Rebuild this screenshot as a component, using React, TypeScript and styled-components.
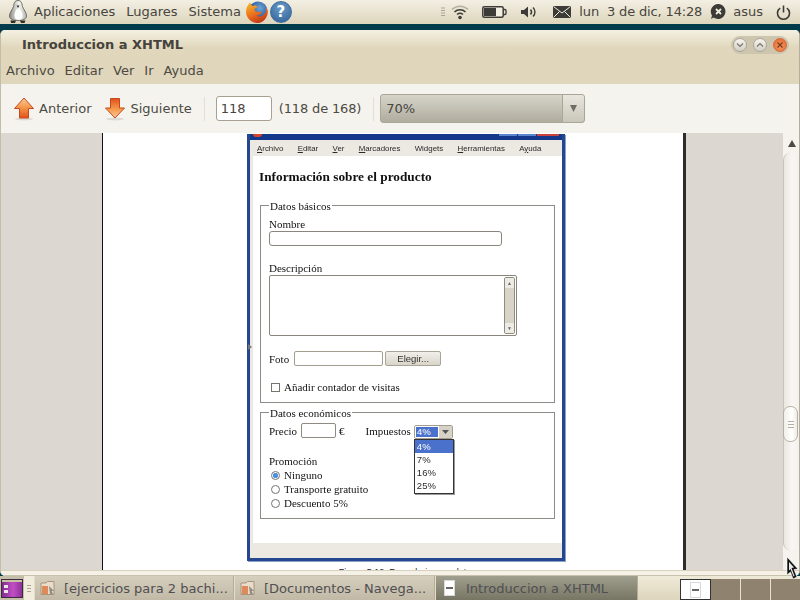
import { createGlobalStyle, styled } from 'styled-components';

const Global = createGlobalStyle`
    html, body {
        margin: 0;
        padding: 0;
        width: 800px;
        height: 600px;
        overflow: hidden;
        background: #003b4c;
    }
    * { box-sizing: border-box; }
`;

const uiFont = `'DejaVu Sans', sans-serif`;
const serif = `'Liberation Serif', serif`;
const arial = `'Liberation Sans', sans-serif`;

export default function App() {
    return (
        <Screen>
            <Global />
            <TopPanel>
                <PenguinSlot>
                    <Penguin />
                </PenguinSlot>
                <PanelMenu>
                    <span>Aplicaciones</span>
                    <span>Lugares</span>
                    <span>Sistema</span>
                </PanelMenu>
                <Launchers>
                    <FirefoxIcon />
                    <HelpCircle>?</HelpCircle>
                </Launchers>
                <Tray>
                    <WifiIcon />
                    <BatteryIcon />
                    <VolumeIcon />
                    <MailIcon />
                    <Clock>lun&nbsp; 3 de dic, 14:28</Clock>
                    <UserIcon />
                    <UserName>asus</UserName>
                    <PowerIcon />
                </Tray>
            </TopPanel>
            <DesktopStrip />
            <Window>
                <TitleBar>
                    <Title>Introduccion a XHTML</Title>
                    <WindowButtons>
                        <WinButton>
                            <svg width="10" height="10" viewBox="0 0 10 10">
                                <path d="M2 3.5 L5 6.5 L8 3.5" fill="none" stroke="#77746c" strokeWidth="1.2" />
                            </svg>
                        </WinButton>
                        <WinButton>
                            <svg width="10" height="10" viewBox="0 0 10 10">
                                <path d="M2 6.5 L5 3.5 L8 6.5" fill="none" stroke="#77746c" strokeWidth="1.2" />
                            </svg>
                        </WinButton>
                        <WinButton $close>
                            <svg width="10" height="10" viewBox="0 0 10 10">
                                <path d="M2.5 2.5 L7.5 7.5 M7.5 2.5 L2.5 7.5" fill="none" stroke="#7a3d20" strokeWidth="1.3" />
                            </svg>
                        </WinButton>
                    </WindowButtons>
                </TitleBar>
                <MenuBar>
                    <span>Archivo</span>
                    <span>Editar</span>
                    <span>Ver</span>
                    <span>Ir</span>
                    <span>Ayuda</span>
                </MenuBar>
                <Toolbar>
                    <ToolButton>
                        <ArrowIcon />
                        Anterior
                    </ToolButton>
                    <ToolButton>
                        <ArrowIcon $down />
                        Siguiente
                    </ToolButton>
                    <ToolSep />
                    <PageInput>118</PageInput>
                    <PageCount>(118 de 168)</PageCount>
                    <ToolSep />
                    <ZoomCombo>
                        <ZoomValue>70%</ZoomValue>
                        <ZoomArrow>
                            <svg width="7" height="7" viewBox="0 0 7 7">
                                <path d="M0 0 H7 L3.5 7 Z" fill="#6f6c64" />
                            </svg>
                        </ZoomArrow>
                    </ZoomCombo>
                </Toolbar>
                <Content>
                    <Viewer>
                        <Page>
                            <Figure>
                                <FigureTitle>
                                    <FigureFavicon />
                                    <FigureButton $w={18} />
                                    <FigureButton $w={18} />
                                    <FigureButton $w={22} $red />
                                </FigureTitle>
                                <FigureMenu>
                                    <span><u>A</u>rchivo</span>
                                    <span><u>E</u>ditar</span>
                                    <span><u>V</u>er</span>
                                    <span><u>M</u>arcadores</span>
                                    <span>Wid<u>g</u>ets</span>
                                    <span><u>H</u>erramientas</span>
                                    <span>A<u>y</u>uda</span>
                                </FigureMenu>
                                <FigureBody>
                                    <Heading>Información sobre el producto</Heading>
                                    <Group $h={203} $gap={4} $pad={7}>
                                        <Legend>Datos básicos</Legend>
                                        <FieldLabel>Nombre</FieldLabel>
                                        <NameInput />
                                        <FieldLabel $top={16}>Descripción</FieldLabel>
                                        <TextArea>
                                            <AreaScroll>
                                                <AreaArrow>▲</AreaArrow>
                                                <AreaTrack />
                                                <AreaArrow>▼</AreaArrow>
                                            </AreaScroll>
                                        </TextArea>
                                        <PhotoRow>
                                            Foto
                                            <FileInput />
                                            <ChooseButton>Elegir...</ChooseButton>
                                        </PhotoRow>
                                        <CheckRow>
                                            <CheckBox />
                                            Añadir contador de visitas
                                        </CheckRow>
                                    </Group>
                                    <Group $h={112} $pad={4}>
                                        <Legend>Datos económicos</Legend>
                                        <PriceRow>
                                            Precio
                                            <PriceInput />
                                            <span>€</span>
                                            <TaxLabel>Impuestos</TaxLabel>
                                            <TaxSelect>
                                                <TaxValue>4%</TaxValue>
                                                <TaxArrow>
                                                    <svg width="7" height="4" viewBox="0 0 7 4">
                                                        <path d="M0 0 H7 L3.5 4 Z" fill="#555" />
                                                    </svg>
                                                </TaxArrow>
                                                <TaxList>
                                                    <TaxOption $active>4%</TaxOption>
                                                    <TaxOption>7%</TaxOption>
                                                    <TaxOption>16%</TaxOption>
                                                    <TaxOption>25%</TaxOption>
                                                </TaxList>
                                            </TaxSelect>
                                        </PriceRow>
                                        <FieldLabel $top={17}>Promoción</FieldLabel>
                                        <RadioRow>
                                            <Radio $on />
                                            Ninguno
                                        </RadioRow>
                                        <RadioRow>
                                            <Radio />
                                            Transporte gratuito
                                        </RadioRow>
                                        <RadioRow>
                                            <Radio />
                                            Descuento 5%
                                        </RadioRow>
                                    </Group>
                                </FigureBody>
                                <FigureStatus />
                            </Figure>
                            <Caption>Figura 5.12. Formulario completo</Caption>
                        </Page>
                        <SideMark />
                    </Viewer>
                    <ScrollBar>
                        <ScrollUp>
                            <svg width="8" height="7" viewBox="0 0 8 7">
                                <path d="M4 0 L8 7 H0 Z" fill="#4c4a45" />
                            </svg>
                        </ScrollUp>
                        <ScrollTrack>
                            <ScrollThumb>
                                <i />
                                <i />
                                <i />
                            </ScrollThumb>
                        </ScrollTrack>
                    </ScrollBar>
                </Content>
                <WindowFoot />
            </Window>
            <BottomPanel>
                <ShowDesktop>
                    <svg width="22" height="19" viewBox="0 0 22 19">
                        <defs>
                            <linearGradient id="desk" x1="0" x2="1" y1="0" y2="0">
                                <stop offset="0" stopColor="#7b2a8c" />
                                <stop offset="0.55" stopColor="#c24fc4" />
                                <stop offset="1" stopColor="#8a2f94" />
                            </linearGradient>
                        </defs>
                        <rect x="0.5" y="0.5" width="21" height="18" fill="url(#desk)" stroke="#3c2a3e" />
                        <rect x="1" y="1" width="20" height="2" fill="#c9c4a2" />
                        <rect x="3" y="6" width="4" height="3" fill="#f2e6f2" />
                        <rect x="3" y="11" width="4" height="3" fill="#f2e6f2" />
                    </svg>
                </ShowDesktop>
                <Handle>
                    <i />
                    <i />
                    <i />
                </Handle>
                <TaskList>
                    <Task $w={200}>
                        <FolderIcon />
                        <TaskText>[ejercicios para 2 bachi...</TaskText>
                    </Task>
                    <Task $w={201}>
                        <FolderIcon />
                        <TaskText>[Documentos - Navega...</TaskText>
                    </Task>
                    <Task $w={203} $active>
                        <DocThumb />
                        <TaskText>Introduccion a XHTML</TaskText>
                    </Task>
                </TaskList>
                <Pager>
                    <PagerCell $active>
                        <DocThumb />
                    </PagerCell>
                    <PagerCell />
                    <PagerCell />
                    <PagerCell />
                </Pager>
            </BottomPanel>
            <Cursor>
                <svg width="13" height="25" viewBox="0 0 13 25">
                    <path d="M1 1 L12 13 L8 13.5 L11 21 L7 23 L4.5 16 L1 19 Z" fill="#111" stroke="#fff" strokeWidth="0.6" />
                    <path d="M3 6 L8 11.5 L5.5 12 L8.5 20 L7.5 20.5 L4.5 13 L3 14.5 Z" fill="#e8e8e8" />
                </svg>
            </Cursor>
        </Screen>
    );
}

function Penguin() {
    return (
        <svg width="20" height="24" viewBox="0 0 20 24">
            <defs>
                <linearGradient id="peng" x1="0" x2="1" y1="0" y2="0">
                    <stop offset="0" stopColor="#8d8d88" />
                    <stop offset="0.55" stopColor="#f4f4f1" />
                    <stop offset="1" stopColor="#b8b8b2" />
                </linearGradient>
            </defs>
            <path d="M10 0.5 C6.5 0.5 6 3.5 5.5 6.5 C4.5 9.5 1.5 12.5 1.5 16 C1.5 19 5 20.5 10 20.5 C15 20.5 18.5 19 18.5 16 C18.5 12.5 15.5 9.5 14.5 6.5 C14 3.5 13.5 0.5 10 0.5 Z" fill="url(#peng)" stroke="#54544f" strokeWidth="0.8" />
            <path d="M10 9 C8 9 6.5 12.5 6.5 15.5 C6.5 18 8 19.5 10.5 19.5 C13 19.5 14.5 18 14.5 15.5 C14.5 12.5 12.5 9 10 9 Z" fill="#fdfdfb" />
            <path d="M8.5 5.5 L11.5 5.5 L10 8 Z" fill="#33332f" />
            <path d="M2.5 20.5 H8 L7 23 H3 Z M12 20.5 H17.5 L16.5 23 H13 Z" fill="#2e2e2a" />
        </svg>
    );
}

function FirefoxIcon() {
    return (
        <svg width="24" height="24" viewBox="0 0 24 24">
            <defs>
                <radialGradient id="ffb" cx="0.6" cy="0.35" r="0.6">
                    <stop offset="0" stopColor="#6fa6d8" />
                    <stop offset="1" stopColor="#1f4f94" />
                </radialGradient>
                <linearGradient id="ffo" x1="0.2" x2="0.7" y1="0" y2="1">
                    <stop offset="0" stopColor="#f7b52c" />
                    <stop offset="0.6" stopColor="#e8641b" />
                    <stop offset="1" stopColor="#b5361a" />
                </linearGradient>
            </defs>
            <circle cx="13" cy="11" r="9.5" fill="url(#ffb)" />
            <path d="M5 2.5 C6 4 6.2 5 7.5 6 C9.5 5 12 5.5 13 7 C11 7.5 9.5 8.5 9.5 10 C10.5 12.5 14 12 16.5 11.5 C16.5 14 14 15.5 11.5 15.5 C14.5 17.5 18.5 16 20.5 12.5 C21.5 10 21.5 8 21 6.5 C23 9.5 23.5 13.5 21.5 17 C19.5 21 15.5 23.5 11.5 23 C6 22.5 1.5 18 1 12.5 C0.8 9 2.5 5 5 2.5 Z" fill="url(#ffo)" />
        </svg>
    );
}

function WifiIcon() {
    return (
        <WifiWrap>
            <svg width="6" height="10" viewBox="0 0 6 10">
                <path d="M1 1 H5 M1 3.5 H5 M1 6 H5 M1 8.5 H5" stroke="#a8a496" strokeWidth="1" />
            </svg>
            <svg width="18" height="16" viewBox="0 0 18 16">
                <path d="M1 5.5 C5.5 1 12.5 1 17 5.5" fill="none" stroke="#b5b1a3" strokeWidth="1.5" />
                <path d="M3.5 8 C6.5 5 11.5 5 14.5 8" fill="none" stroke="#3c3b37" strokeWidth="1.6" />
                <path d="M6 10.5 C7.8 9 10.2 9 12 10.5" fill="none" stroke="#3c3b37" strokeWidth="1.6" />
                <circle cx="9" cy="13.5" r="1.8" fill="#3c3b37" />
            </svg>
        </WifiWrap>
    );
}

function BatteryIcon() {
    return (
        <svg width="25" height="14" viewBox="0 0 25 14">
            <rect x="0.8" y="1.8" width="20.4" height="10.4" rx="1.5" fill="#f2eee2" stroke="#3c3b37" strokeWidth="1.5" />
            <rect x="2" y="3" width="12" height="8" fill="#3c3b37" />
            <path d="M22 4.5 H23 A1 1 0 0 1 24 5.5 V8.5 A1 1 0 0 1 23 9.5 H22" fill="none" stroke="#3c3b37" strokeWidth="1.3" />
        </svg>
    );
}

function VolumeIcon() {
    return (
        <svg width="18" height="14" viewBox="0 0 18 14">
            <path d="M1 5 H4 L8 1.5 V12.5 L4 9 H1 Z" fill="#3c3b37" />
            <path d="M10.5 4.5 C11.8 6 11.8 8 10.5 9.5" fill="none" stroke="#3c3b37" strokeWidth="1.4" />
            <path d="M13 2.5 C15.6 5 15.6 9 13 11.5" fill="none" stroke="#3c3b37" strokeWidth="1.4" />
        </svg>
    );
}

function MailIcon() {
    return (
        <svg width="18" height="12" viewBox="0 0 18 12">
            <rect width="18" height="12" fill="#3c3b37" />
            <path d="M0.5 0.5 L9 7 L17.5 0.5 M0.5 11.5 L6.5 5.5 M17.5 11.5 L11.5 5.5" fill="none" stroke="#f0ecde" strokeWidth="1" />
        </svg>
    );
}

function UserIcon() {
    return (
        <svg width="17" height="18" viewBox="0 0 17 18">
            <path d="M8.5 1 A7.5 7.5 0 1 1 3.5 14.5 L1 16 L2 12.5 A7.5 7.5 0 0 1 8.5 1 Z" fill="#3c3b37" />
            <path d="M6 6 L11 11 M11 6 L6 11" stroke="#f0ecde" strokeWidth="1.8" />
        </svg>
    );
}

function PowerIcon() {
    return (
        <svg width="15" height="15" viewBox="0 0 15 15">
            <path d="M4.2 3.2 A6 6 0 1 0 10.8 3.2" fill="none" stroke="#3c3b37" strokeWidth="1.6" />
            <path d="M7.5 0.5 V7.5" stroke="#3c3b37" strokeWidth="1.6" />
        </svg>
    );
}

function ArrowIcon({ $down }: { $down?: boolean }) {
    const id = $down ? 'arrowDown' : 'arrowUp';
    return (
        <svg width="20" height="24" viewBox="0 0 20 24">
            <defs>
                <linearGradient id={id} x1="0" x2="0" y1={$down ? '0' : '1'} y2={$down ? '1' : '0'}>
                    <stop offset="0" stopColor="#e2501b" />
                    <stop offset="0.55" stopColor="#f59a4c" />
                    <stop offset="1" stopColor="#fbc99a" />
                </linearGradient>
            </defs>
            <ellipse cx="10" cy="22" rx="9" ry="1.5" fill="#000" opacity="0.1" />
            {$down ? (
                <path d="M5.5 1.5 H14.5 V11 H19.5 L10 21 L0.5 11 H5.5 Z" fill={`url(#${id})`} stroke="#c4491c" strokeWidth="1" />
            ) : (
                <path d="M10 1 L19.5 11.5 H14.5 V21 H5.5 V11.5 H0.5 Z" fill={`url(#${id})`} stroke="#c4491c" strokeWidth="1" />
            )}
        </svg>
    );
}

function FolderIcon() {
    return (
        <svg width="16" height="16" viewBox="0 0 16 16">
            <path d="M1 3 H6 L7.5 1.5 H14 V14.5 H1 Z" fill="#e9dccb" stroke="#a8937e" />
            <rect x="2" y="6" width="6" height="8" fill="#e08a5c" />
            <path d="M9 6 L14 11 L11.5 11 L13 14 H10 Z" fill="#8f8a80" />
        </svg>
    );
}

const Screen = styled.div`
    position: relative;
    width: 800px;
    height: 600px;
    display: flex;
    flex-direction: column;
    overflow: hidden;
    font-family: ${uiFont};
    font-size: 13px;
    color: #4c4a43;
`;

const TopPanel = styled.div`
    height: 24px;
    display: flex;
    align-items: center;
    background: linear-gradient(#f3efe3, #ddd5bc);
    flex-shrink: 0;
`;

const PenguinSlot = styled.div`
    width: 34px;
    height: 24px;
    padding-left: 8px;
`;

const PanelMenu = styled.div`
    display: flex;
    gap: 11px;
    padding-bottom: 2px;
    color: #47453e;
`;

const Launchers = styled.div`
    display: flex;
    align-items: center;
    gap: 1px;
    margin-left: 4px;
`;

const HelpCircle = styled.div`
    width: 22px;
    height: 22px;
    border-radius: 50%;
    background: radial-gradient(circle at 50% 30%, #6d9cc8, #2b5f97);
    border: 1px solid #3e6d9e;
    color: #fff;
    font-size: 15px;
    font-weight: 700;
    text-align: center;
    line-height: 20px;
`;

const Tray = styled.div`
    margin-left: auto;
    display: flex;
    align-items: center;
    height: 24px;
    padding-right: 9px;
    & > svg:nth-of-type(1) { margin-left: 13px; }
    & > svg:nth-of-type(2) { margin-left: 13px; }
    & > svg:nth-of-type(3) { margin-left: 15px; }
`;

const WifiWrap = styled.div`
    display: flex;
    align-items: center;
    gap: 5px;
`;

const Clock = styled.span`
    margin: 0 8px 2px 8px;
    letter-spacing: -0.15px;
    color: #47453e;
    white-space: nowrap;
`;

const UserName = styled.span`
    margin: 0 13px 2px 6px;
    color: #47453e;
`;

const DesktopStrip = styled.div`
    height: 6px;
    background: #003b4c;
    flex-shrink: 0;
`;

const Window = styled.div`
    flex: 1;
    min-height: 0;
    display: flex;
    flex-direction: column;
    background: #f5f3ee;
    border-left: 1px solid #c4bdaa;
    border-right: 1px solid #b5ae9c;
    border-radius: 5px;
    overflow: hidden;
`;

const TitleBar = styled.div`
    height: 29px;
    display: flex;
    align-items: center;
    padding: 0 10px 0 21px;
    background: linear-gradient(#f5f1e2, #e0d7bc 60%, #dfd6bb);
    flex-shrink: 0;
`;

const Title = styled.div`
    font-weight: 700;
    font-size: 13px;
    color: #45433c;
`;

const WindowButtons = styled.div`
    margin-left: auto;
    display: flex;
    gap: 6px;
    padding: 2px 2px;
    border-radius: 9px;
    background: #cdc5ae;
`;

const WinButton = styled.div<{ $close?: boolean }>`
    width: 14px;
    height: 14px;
    border-radius: 50%;
    display: flex;
    align-items: center;
    justify-content: center;
    background: ${p => (p.$close ? 'radial-gradient(circle at 50% 60%, #f39a5f, #e4632e)' : 'linear-gradient(#f6f4ee, #d3cfc5)')};
    border: 1px solid ${p => (p.$close ? '#d46a3a' : '#a9a599')};
`;

const MenuBar = styled.div`
    height: 25px;
    display: flex;
    align-items: center;
    gap: 10px;
    padding: 0 0 2px 5px;
    background: #dfd6bb;
    color: #4c4a43;
    flex-shrink: 0;
`;

const Toolbar = styled.div`
    height: 49px;
    display: flex;
    align-items: center;
    padding-left: 13px;
    background: #f5f3ee;
    flex-shrink: 0;
`;

const ToolButton = styled.div`
    display: flex;
    align-items: center;
    gap: 5px;
    margin-right: 14px;
    color: #4c4a43;
    &:nth-child(2) { margin-right: 0; }
`;

const ToolSep = styled.div`
    width: 1px;
    height: 24px;
    margin: 0 12px;
    background: #e3dfd5;
`;

const PageInput = styled.div`
    width: 56px;
    height: 25px;
    margin-left: -1px;
    padding: 0 4px;
    line-height: 23px;
    background: #fff;
    border: 1px solid #a8a090;
    border-radius: 3px;
    color: #47453e;
`;

const PageCount = styled.div`
    margin-left: 7px;
    letter-spacing: -0.15px;
    color: #4c4a43;
    white-space: nowrap;
`;

const ZoomCombo = styled.div`
    width: 205px;
    height: 29px;
    display: flex;
    border: 1px solid #a9a698;
    border-radius: 3px;
    background: linear-gradient(#d6d3c9, #b0ad9f);
    color: #47453e;
    margin-left: -6px;
`;

const ZoomValue = styled.div`
    flex: 1;
    padding-left: 5px;
    line-height: 27px;
`;

const ZoomArrow = styled.div`
    width: 22px;
    border-left: 1px solid #a9a698;
    display: flex;
    align-items: center;
    justify-content: center;
    background: linear-gradient(#e8e6de, #c9c6ba);
    border-radius: 0 3px 3px 0;
`;

const Content = styled.div`
    flex: 1;
    min-height: 0;
    display: flex;
`;

const WindowFoot = styled.div`
    height: 6px;
    flex-shrink: 0;
    background: #f5f1e6;
    border-top: 1px solid #d8d1bf;
    border-bottom: 1px solid #c8c1ad;
`;

const Viewer = styled.div`
    position: relative;
    width: 782px;
    padding-left: 101px;
    background: #dcd8d1;
    overflow: hidden;
`;

const Page = styled.div`
    width: 584px;
    height: 100%;
    background: #fff;
    border-left: 1px solid #111;
    border-right: 3px solid #2e2d2b;
    padding-left: 144px;
    overflow: hidden;
`;

const Figure = styled.div`
    width: 318px;
    height: 427px;
    margin-top: 1px;
    display: flex;
    flex-direction: column;
    border: 3px solid #24478f;
    border-top: 0;
    background: #ece9e3;
    box-shadow: 1px 1px 0 #8ba0c8;
    font-family: ${serif};
    font-size: 11px;
    color: #111;
    filter: blur(0.3px);
`;

const FigureTitle = styled.div`
    height: 6px;
    display: flex;
    justify-content: flex-end;
    gap: 1px;
    padding: 0 3px 0 3px;
    background: #15398a;
    flex-shrink: 0;
`;

const FigureFavicon = styled.div`
    width: 9px;
    height: 3px;
    margin-right: auto;
    border-radius: 0 0 5px 5px;
    background: #d8432c;
`;

const FigureButton = styled.div<{ $w: number; $red?: boolean }>`
    width: ${p => p.$w}px;
    height: 2px;
    background: ${p => (p.$red ? '#c8413a' : '#5c86cc')};
`;

const FigureMenu = styled.div`
    height: 16px;
    display: flex;
    align-items: center;
    gap: 14.3px;
    padding-left: 7px;
    font-family: ${arial};
    font-size: 7.9px;
    color: #2a2a2a;
    flex-shrink: 0;
`;

const FigureBody = styled.div`
    flex: 1;
    margin: 0 0 0 3px;
    padding: 13px 7px 0 7px;
    background: #fff;
`;

const Heading = styled.div`
    font-size: 13.3px;
    font-weight: 700;
    line-height: 15px;
    margin: 0 0 16px -1px;
    color: #111;
`;

const Group = styled.fieldset<{ $h: number; $gap?: number; $pad: number }>`
    height: ${p => p.$h}px;
    margin: 0 0 ${p => p.$gap ?? 0}px 0;
    padding: ${p => p.$pad}px 8px 0 8px;
    border: 1px solid #8e8c86;
    min-width: 0;
`;

const Legend = styled.legend`
    height: 11px;
    padding: 0 1px;
    margin-left: 0;
    font-size: 11px;
    line-height: 13px;
    color: #111;
`;

const FieldLabel = styled.div<{ $top?: number }>`
    margin-top: ${p => p.$top ?? 0}px;
    line-height: 13px;
    height: 13px;
`;

const NameInput = styled.div`
    width: 233px;
    height: 15px;
    background: #fff;
    border: 1px solid #8a867c;
    border-radius: 3px;
`;

const TextArea = styled.div`
    width: 248px;
    height: 61px;
    display: flex;
    justify-content: flex-end;
    padding: 1px;
    background: #fff;
    border: 1px solid #8a867c;
    border-radius: 2px;
`;

const AreaScroll = styled.div`
    width: 11px;
    display: flex;
    flex-direction: column;
    border: 1px solid #8f8b80;
    border-radius: 2px;
    background: #d9d4c8;
`;

const AreaArrow = styled.div`
    height: 10px;
    font-size: 5px;
    line-height: 10px;
    text-align: center;
    color: #666;
    background: #ecebe4;
    font-family: ${arial};
`;

const AreaTrack = styled.div`
    flex: 1;
    background: #d9d4c8;
`;

const PhotoRow = styled.div`
    display: flex;
    align-items: center;
    height: 15px;
    margin-top: 15px;
`;

const FileInput = styled.div`
    width: 89px;
    height: 15px;
    margin-left: 5px;
    background: #fff;
    border: 1px solid #a49e90;
    border-radius: 2px;
`;

const ChooseButton = styled.div`
    width: 56px;
    height: 15px;
    margin-left: 2px;
    border: 1px solid #a8a498;
    border-radius: 2px;
    background: linear-gradient(#f1efe9, #d9d5ca);
    font-family: ${arial};
    font-size: 9.5px;
    line-height: 13px;
    text-align: center;
    color: #333;
`;

const CheckRow = styled.div`
    display: flex;
    align-items: center;
    height: 12px;
    margin: 15px 0 0 2px;
    gap: 4px;
`;

const CheckBox = styled.div`
    width: 9px;
    height: 9px;
    border: 1px solid #77746c;
    background: #fff;
`;

const PriceRow = styled.div`
    display: flex;
    align-items: center;
    height: 15px;
    margin-top: 1px;
`;

const PriceInput = styled.div`
    width: 35px;
    height: 15px;
    margin: 0 3px 0 4px;
    background: #fff;
    border: 1px solid #8f8b80;
    border-radius: 2px;
`;

const TaxLabel = styled.span`
    margin-left: 21px;
`;

const TaxSelect = styled.div`
    position: relative;
    width: 39px;
    height: 14px;
    margin: 2px 0 0 3px;
    display: flex;
    padding: 1px;
    border: 1px solid #a39e92;
    border-radius: 2px;
    font-family: ${arial};
    font-size: 9.5px;
    background: #fff;
`;

const TaxValue = styled.div`
    width: 22px;
    background: #4a72cc;
    color: #fff;
    line-height: 10px;
    padding-left: 1px;
`;

const TaxArrow = styled.div`
    flex: 1;
    margin: -1px -1px -1px 1px;
    background: #d7d2c6;
    display: flex;
    align-items: center;
    justify-content: center;
`;

const TaxList = styled.div`
    position: absolute;
    top: 13px;
    left: -1px;
    width: 40px;
    height: 55px;
    background: #fff;
    border: 1px solid #333;
    box-shadow: 1px 1px 0 #9a9a9a;
`;

const TaxOption = styled.div<{ $active?: boolean }>`
    height: 13.2px;
    padding-left: 2px;
    line-height: 13px;
    color: ${p => (p.$active ? '#fff' : '#2a2a2a')};
    background: ${p => (p.$active ? '#4a72cc' : 'transparent')};
`;

const RadioRow = styled.div`
    display: flex;
    align-items: center;
    gap: 4px;
    height: 14px;
    margin-left: 2px;
`;

const Radio = styled.div<{ $on?: boolean }>`
    width: 9px;
    height: 9px;
    border-radius: 50%;
    border: 1px solid #77746c;
    background: ${p => (p.$on ? 'radial-gradient(circle, #4a8fe0 0 2.2px, #fff 3px)' : '#fff')};
`;

const FigureStatus = styled.div`
    height: 15px;
    flex-shrink: 0;
`;

const Caption = styled.div`
    margin: 6px 0 0 -12px;
    width: 340px;
    text-align: center;
    font-family: ${arial};
    font-size: 9px;
    line-height: 10px;
    color: #222;
    white-space: nowrap;
`;

const SideMark = styled.div`
    position: absolute;
    left: 247px;
    top: 211px;
    width: 0;
    height: 0;
    border-left: 4px solid #777;
    border-top: 3px solid transparent;
    border-bottom: 3px solid transparent;
`;

const ScrollBar = styled.div`
    width: 16px;
    display: flex;
    flex-direction: column;
    background: #f5f3ee;
`;

const ScrollUp = styled.div`
    height: 20px;
    display: flex;
    align-items: center;
    justify-content: center;
    padding-left: 1px;
    flex-shrink: 0;
`;

const ScrollTrack = styled.div`
    flex: 1;
    padding-top: 253px;
    margin-bottom: 20px;
    background: linear-gradient(90deg, #eae7e0, #f8f7f4 55%, #f3f1ec);
    border-left: 1px solid #c9c4b8;
    border-radius: 7px;
`;

const ScrollThumb = styled.div`
    width: 15px;
    height: 36px;
    display: flex;
    flex-direction: column;
    align-items: center;
    justify-content: center;
    gap: 2px;
    background: linear-gradient(90deg, #f2efe8, #fff 60%, #efece5);
    border: 1px solid #b6b0a2;
    border-radius: 7px;
    margin-left: -1px;
    i {
        width: 6px;
        height: 1px;
        background: #b5b0a3;
    }
`;

const Cursor = styled.div`
    position: absolute;
    left: 786px;
    top: 556px;
    line-height: 0;
`;

const BottomPanel = styled.div`
    height: 24px;
    display: flex;
    align-items: center;
    background: linear-gradient(#efe9d8, #ddd5bc);
    flex-shrink: 0;
`;

const ShowDesktop = styled.div`
    width: 24px;
    height: 24px;
    padding: 3px 0 0 1px;
    background: #c4bda8;
`;

const Handle = styled.div`
    width: 10px;
    height: 24px;
    display: flex;
    flex-direction: column;
    align-items: center;
    justify-content: center;
    gap: 2px;
    background: #f1ecdb;
    i {
        width: 4px;
        height: 1px;
        background: #a8a498;
    }
`;

const TaskList = styled.div`
    display: flex;
    height: 24px;
`;

const Task = styled.div<{ $w: number; $active?: boolean }>`
    width: ${p => p.$w}px;
    height: 24px;
    display: flex;
    align-items: center;
    gap: ${p => (p.$active ? '11px' : '8px')};
    padding-left: ${p => (p.$active ? '8px' : '5px')};
    background: ${p => (p.$active ? 'linear-gradient(#a09e8c, #777564)' : 'linear-gradient(#d6cfbd, #c1b9a6)')};
    border-right: 1px solid #b5ad9a;
    border-left: 1px solid #e4ddc9;
`;

const TaskText = styled.span`
    color: #4f4f52;
    white-space: nowrap;
`;

const DocThumb = styled.div`
    position: relative;
    width: 11px;
    height: 16px;
    background: #fff;
    border: 1px solid #d8d8d8;
    &::after {
        content: '';
        position: absolute;
        left: 1px;
        top: 6px;
        width: 7px;
        height: 2px;
        background: #666;
    }
`;

const Pager = styled.div`
    margin-left: auto;
    display: flex;
    height: 24px;
    padding: 3px 0 0 0;
    width: 120px;
`;

const PagerCell = styled.div<{ $active?: boolean }>`
    flex: 1;
    height: 21px;
    display: flex;
    align-items: center;
    justify-content: center;
    background: ${p => (p.$active ? '#fff' : '#8f8370')};
    border: ${p => (p.$active ? '1px solid #333' : '0')};
    border-right: ${p => (p.$active ? '1px solid #333' : '1px solid #e8e2d0')};
    &:last-child { border-right: 0; }
`;
